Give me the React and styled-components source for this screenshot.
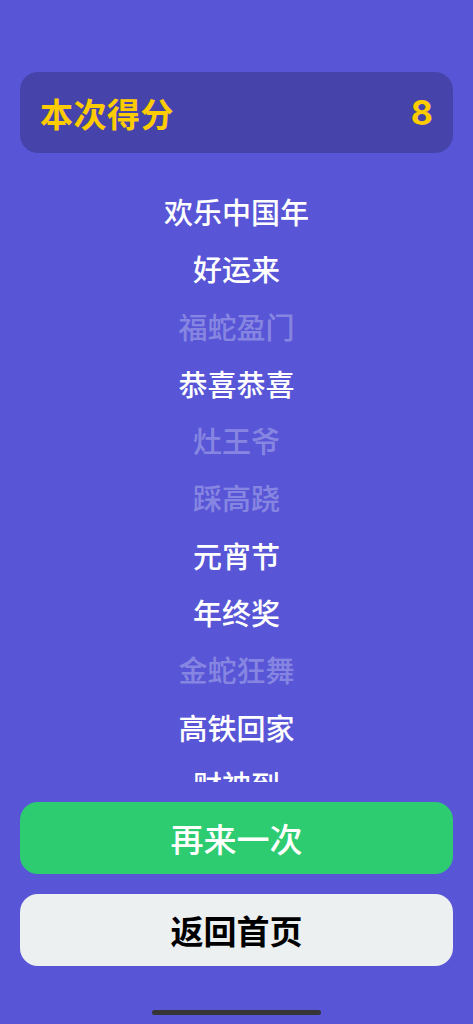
import React from "react";
import styled, { createGlobalStyle } from "styled-components";

const GlobalStyle = createGlobalStyle`
  html, body {
    margin: 0;
    padding: 0;
    background: #5856d6;
  }
  body {
    font-family: "Noto Sans CJK SC", "Noto Sans", sans-serif;
    -webkit-font-smoothing: antialiased;
  }
`;

const Screen = styled.div`
  height: 1024px;
  display: flex;
  flex-direction: column;
  padding: 72px 20px 9px;
  box-sizing: border-box;
  background: #5856d6;
  overflow: hidden;
`;

const ScoreCard = styled.div`
  flex: none;
  height: 81px;
  border-radius: 18px;
  background: rgba(0, 0, 0, 0.2);
  display: flex;
  align-items: center;
  justify-content: space-between;
  padding: 0 20px;
  color: #ffcc00;
  font-weight: 700;
`;

const ScoreLabel = styled.span`
  font-size: 33px;
  letter-spacing: 0.5px;
`;

const ScoreValue = styled.span`
  font-family: "Inter", "Liberation Sans", sans-serif;
  font-size: 34px;
  font-weight: 700;
`;

const WordList = styled.ul`
  flex: 1;
  min-height: 0;
  margin: 0;
  padding: 30px 0 0;
  list-style: none;
  overflow: hidden;
`;

const Word = styled.li`
  height: 57.3px;
  line-height: 57.3px;
  text-align: center;
  font-size: 29px;
  font-weight: 500;
  color: ${(p) => (p.$skipped ? "rgba(255, 255, 255, 0.3)" : "#ffffff")};
`;

const Actions = styled.div`
  flex: none;
  display: flex;
  flex-direction: column;
  gap: 20px;
  margin-top: 20px;
`;

const ActionButton = styled.button`
  height: 72px;
  border: none;
  border-radius: 18px;
  font-family: inherit;
  font-size: 33px;
  font-weight: ${(p) => (p.$primary ? 500 : 700)};
  background: ${(p) => (p.$primary ? "#2ecc71" : "#ecf0f1")};
  color: ${(p) => (p.$primary ? "#ffffff" : "#000000")};
  display: flex;
  align-items: center;
  justify-content: center;
  padding: 0;
  cursor: pointer;
`;

const HomeBar = styled.div`
  flex: none;
  align-self: center;
  width: 169px;
  height: 5px;
  border-radius: 3px;
  background: #353535;
  margin-top: 44px;
`;

const words = [
  { text: "欢乐中国年", skipped: false },
  { text: "好运来", skipped: false },
  { text: "福蛇盈门", skipped: true },
  { text: "恭喜恭喜", skipped: false },
  { text: "灶王爷", skipped: true },
  { text: "踩高跷", skipped: true },
  { text: "元宵节", skipped: false },
  { text: "年终奖", skipped: false },
  { text: "金蛇狂舞", skipped: true },
  { text: "高铁回家", skipped: false },
  { text: "财神到", skipped: false },
  { text: "压岁钱", skipped: false },
];

export default function App() {
  const score = words.filter((w) => !w.skipped).length;
  return (
    <>
      <GlobalStyle />
      <Screen>
        <ScoreCard>
          <ScoreLabel>本次得分</ScoreLabel>
          <ScoreValue>{score}</ScoreValue>
        </ScoreCard>
        <WordList>
          {words.map((w) => (
            <Word key={w.text} $skipped={w.skipped}>
              {w.text}
            </Word>
          ))}
        </WordList>
        <Actions>
          <ActionButton $primary>再来一次</ActionButton>
          <ActionButton>返回首页</ActionButton>
        </Actions>
        <HomeBar />
      </Screen>
    </>
  );
}
